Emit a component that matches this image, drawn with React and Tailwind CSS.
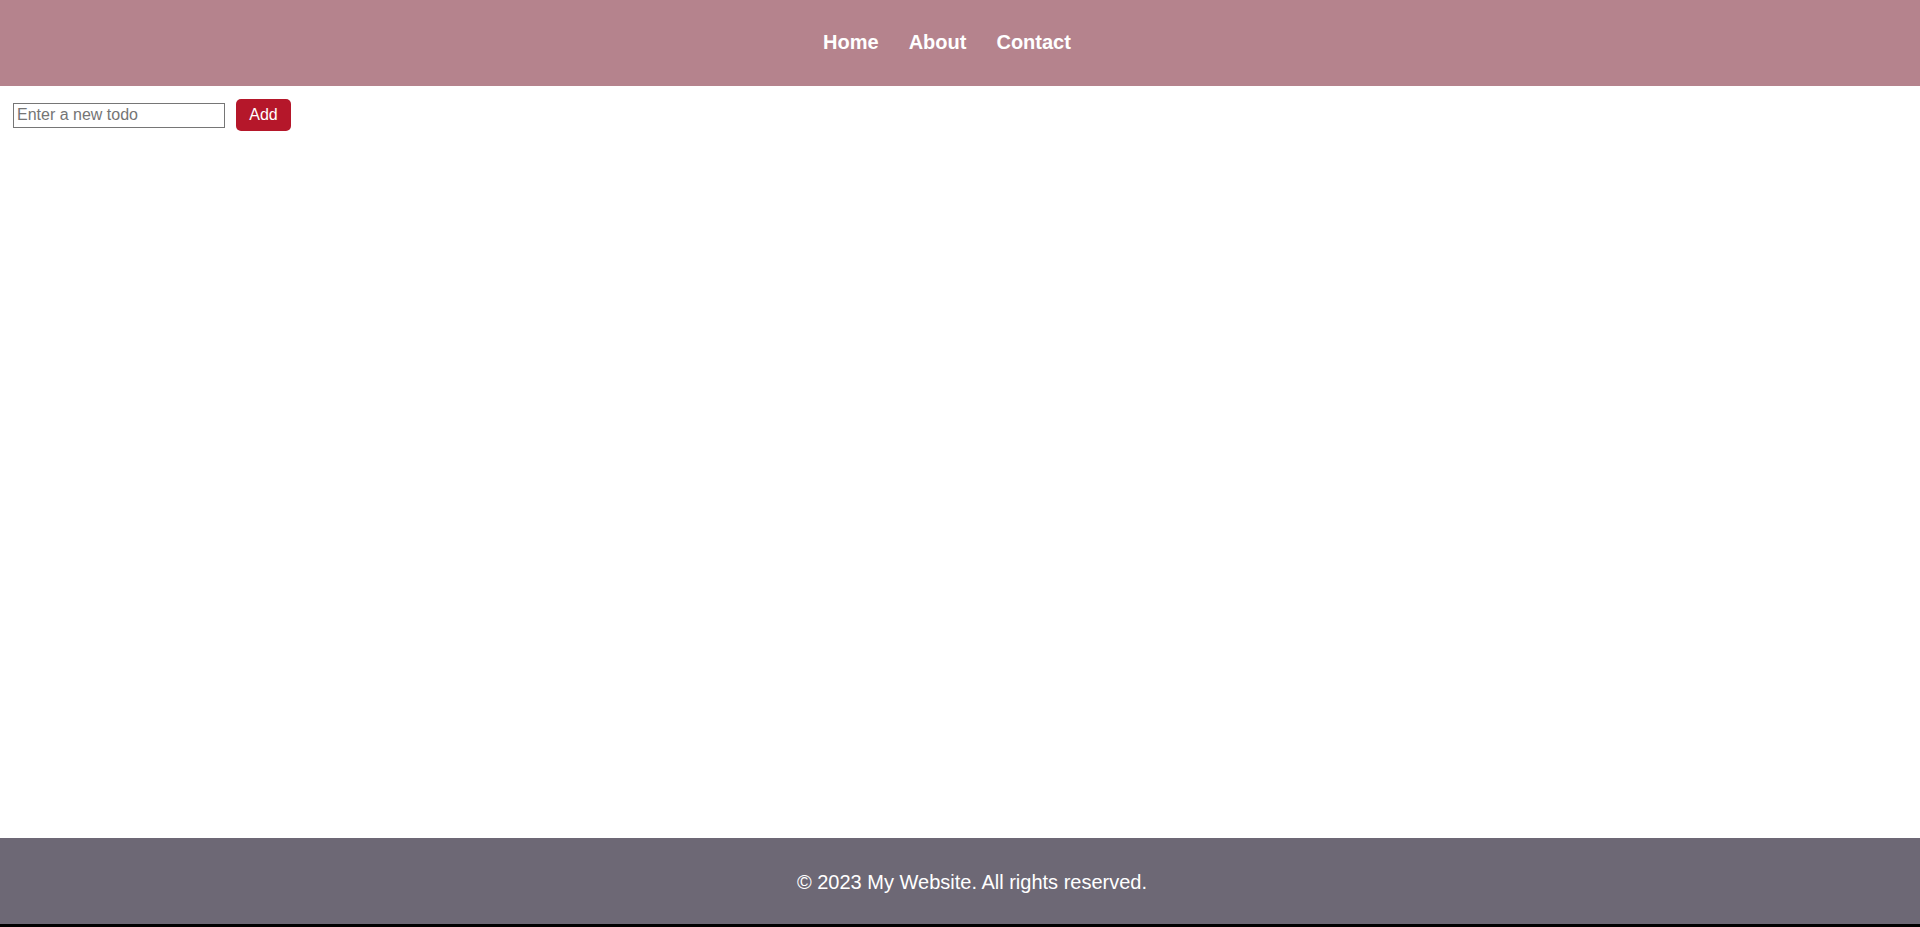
import React from "react";

export default function App() {
  return (
    <div
      className="flex h-screen flex-col bg-white"
      style={{ fontFamily: '"Liberation Sans", Arial, sans-serif' }}
    >
      <header className="flex h-[86px] shrink-0 items-center justify-center bg-[#b5838d] pb-[2px]">
        <nav>
          <ul className="flex pl-[4px]">
            {["Home", "About", "Contact"].map((t) => (
              <li key={t} className="mr-[30px]">
                <a href="#" className="text-[20px] font-bold text-white">
                  {t}
                </a>
              </li>
            ))}
          </ul>
        </nav>
      </header>
      <main className="flex-1">
        <div className="flex items-center pl-[13px] pt-[13px]">
          <input
            type="text"
            placeholder="Enter a new todo"
            className="box-border h-[25px] w-[212px] border border-[#767676] px-[3px] text-[16px] text-black placeholder:text-[#757575] outline-none"
          />
          <button className="ml-[11px] h-[32px] w-[55px] rounded-[5px] bg-[#b5172a] text-[16px] text-white">
            Add
          </button>
        </div>
      </main>
      <footer className="flex h-[86px] shrink-0 items-center justify-center bg-[#6d6875] pl-[24px] pt-[2px]">
        <p className="text-[20px] text-white">© 2023 My Website. All rights reserved.</p>
      </footer>
      <div className="h-[3px] shrink-0 bg-black" />
    </div>
  );
}
